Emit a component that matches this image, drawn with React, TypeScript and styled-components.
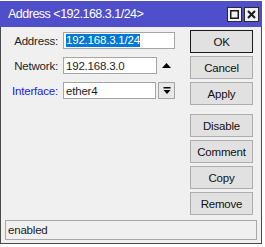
import styled, { createGlobalStyle } from 'styled-components';

const GlobalStyle = createGlobalStyle`
    body {
        margin: 0;
        background: #ffffff;
        font-family: 'Liberation Sans', Arial, sans-serif;
    }
`;

const Window = styled.div`
    box-sizing: border-box;
    margin-top: 1px;
    width: 262px;
    height: 243px;
    display: flex;
    flex-direction: column;
    background: #f0f0f0;
    border: 1px solid #4a4a4a;
    border-top: none;
`;

const TitleBar = styled.div`
    height: 26px;
    display: flex;
    align-items: center;
    background: #4f4fcc;
    margin: 0 -1px;
    padding: 0 3px 0 8px;
`;

const Title = styled.div`
    flex: 1;
    color: #ffffff;
    font-size: 12.5px;
    letter-spacing: -0.5px;
    padding-bottom: 1px;
`;

const TitleButton = styled.div`
    box-sizing: border-box;
    width: 15px;
    height: 15px;
    margin-left: 2px;
    display: flex;
    align-items: center;
    justify-content: center;
    background: #f0f0f0;
    border: 1px solid #2a2a2a;
`;

const Body = styled.div`
    flex: 1;
    display: flex;
    font-size: 11.5px;
    letter-spacing: -0.2px;
    color: #1e1e1e;
`;

const Form = styled.div`
    display: flex;
    flex-direction: column;
    gap: 8px;
    padding-top: 5px;
`;

const Row = styled.div`
    display: flex;
    align-items: center;
    height: 17px;
`;

// labels are right aligned against the fields
const Label = styled.div<{ $link?: boolean }>`
    box-sizing: border-box;
    width: 62px;
    padding-right: 5px;
    text-align: right;
    color: ${(p) => (p.$link ? '#2424dc' : '#1e1e1e')};
`;

const Field = styled.div<{ $width: number }>`
    box-sizing: border-box;
    width: ${(p) => p.$width}px;
    height: 17px;
    display: flex;
    align-items: center;
    padding-left: 2px;
    background: #ffffff;
    border: 1px solid #a5a5a5;
    white-space: nowrap;
`;

const Selected = styled.span`
    background: #0078d7;
    color: #ffffff;
    line-height: 13px;
`;

const Arrow = styled.div`
    display: flex;
    align-items: center;
    margin-left: 5px;
    padding-bottom: 1px;
`;

const DropButton = styled.div`
    box-sizing: border-box;
    width: 17px;
    height: 17px;
    margin-left: 2px;
    display: flex;
    align-items: center;
    justify-content: center;
    background: #e8e8e8;
    border: 1px solid #a5a5a5;
`;

const Buttons = styled.div`
    margin-left: auto;
    padding: 3px 8px 0 0;
    display: flex;
    flex-direction: column;
    gap: 3px;
`;

const Button = styled.div<{ $primary?: boolean; $spaced?: boolean }>`
    box-sizing: border-box;
    width: 63px;
    height: 23px;
    display: flex;
    align-items: center;
    justify-content: center;
    background: #e1e1e1;
    border: 1px solid ${(p) => (p.$primary ? '#1a1a1a' : '#adadad')};
    margin-top: ${(p) => (p.$spaced ? '6px' : '0')};
    color: #111111;
`;

const StatusBar = styled.div`
    box-sizing: border-box;
    height: 20px;
    margin: 0 4px 3px 4px;
    display: flex;
    align-items: center;
    padding-left: 2px;
    border: 1px solid #a8a8a8;
    font-size: 11.5px;
    letter-spacing: -0.2px;
    color: #1e1e1e;
`;

const App = () => {
    return (
        <>
            <GlobalStyle />
            <Window>
                <TitleBar>
                    <Title>Address &lt;192.168.3.1/24&gt;</Title>
                    <TitleButton>
                        <svg width="9" height="9" viewBox="0 0 9 9">
                            <rect x="0.75" y="0.75" width="7.5" height="7.5" fill="none" stroke="#1a1a1a" strokeWidth="1.5" />
                        </svg>
                    </TitleButton>
                    <TitleButton>
                        <svg width="9" height="9" viewBox="0 0 9 9">
                            <path d="M1 1 L8 8 M8 1 L1 8" stroke="#1a1a1a" strokeWidth="2" />
                        </svg>
                    </TitleButton>
                </TitleBar>
                <Body>
                    <Form>
                        <Row>
                            <Label>Address:</Label>
                            <Field $width={112}>
                                <Selected>192.168.3.1/24</Selected>
                            </Field>
                        </Row>
                        <Row>
                            <Label>Network:</Label>
                            <Field $width={94}>192.168.3.0</Field>
                            <Arrow>
                                <svg width="9" height="5" viewBox="0 0 9 5">
                                    <polygon points="0,5 9,5 4.5,0" fill="#000" />
                                </svg>
                            </Arrow>
                        </Row>
                        <Row>
                            <Label $link>Interface:</Label>
                            <Field $width={93}>ether4</Field>
                            <DropButton>
                                <svg width="8" height="8" viewBox="0 0 8 8">
                                    <rect x="0.5" y="0" width="7" height="1.5" fill="#000" />
                                    <polygon points="0.5,3 7.5,3 4,7" fill="#000" />
                                </svg>
                            </DropButton>
                        </Row>
                    </Form>
                    <Buttons>
                        <Button $primary>OK</Button>
                        <Button>Cancel</Button>
                        <Button>Apply</Button>
                        <Button $spaced>Disable</Button>
                        <Button>Comment</Button>
                        <Button>Copy</Button>
                        <Button>Remove</Button>
                    </Buttons>
                </Body>
                <StatusBar>enabled</StatusBar>
            </Window>
        </>
    );
};

export default App;
